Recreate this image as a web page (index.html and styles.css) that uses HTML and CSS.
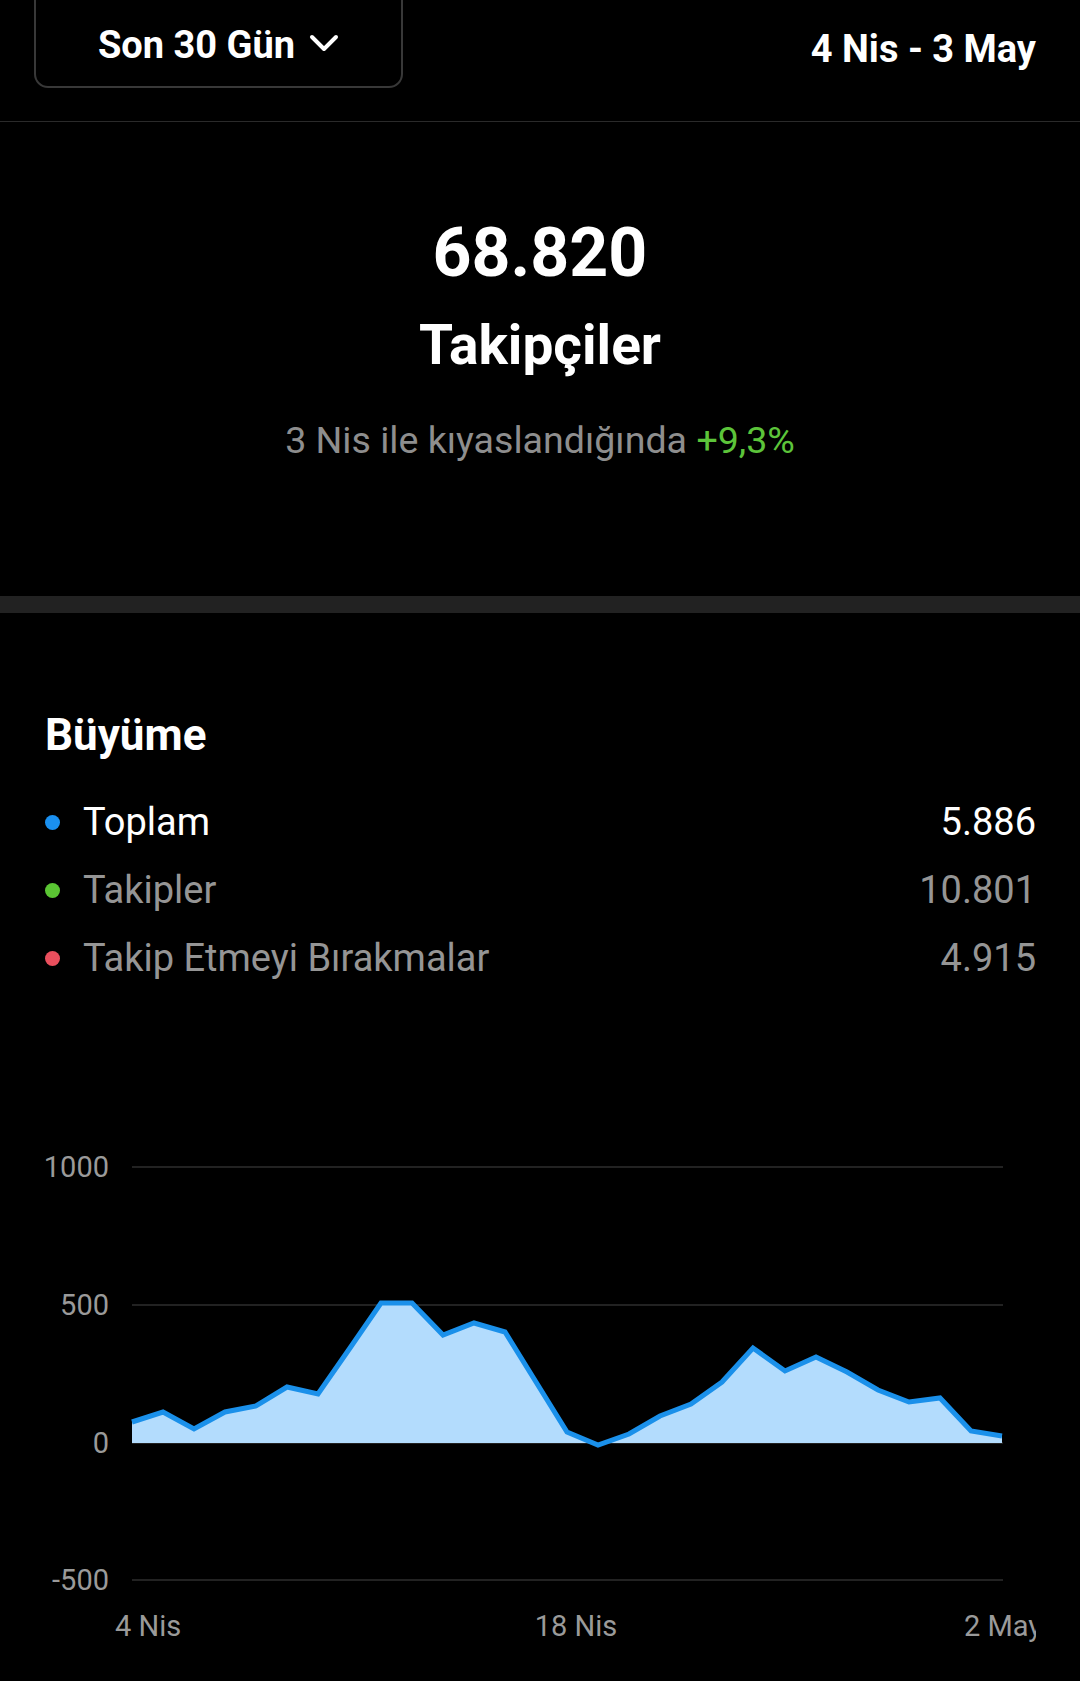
FILE: index.html
```html
<!DOCTYPE html>
<html lang="tr">
<head>
  <meta charset="UTF-8" />
  <meta name="viewport" content="width=device-width, initial-scale=1.0" />
  <title>Takipçiler</title>
  <link rel="stylesheet" href="styles.css">
</head>
<body>
  <header class="topbar">
    <button class="range">
      <span class="range-inner">
        Son 30 Gün
        <svg class="chevron" width="30" height="18" viewBox="0 0 30 18">
          <path d="M3 3 L15 15 L27 3" fill="none" stroke="#fff" stroke-width="4" stroke-linecap="round" stroke-linejoin="round" />
        </svg>
      </span>
    </button>
    <div class="dates">4 Nis - 3 May</div>
  </header>

  <section class="summary">
    <div class="total">68.820</div>
    <div class="total-label">Takipçiler</div>
    <div class="compare">3 Nis ile kıyaslandığında <span class="up">+9,3%</span></div>
  </section>

  <div class="band"></div>

  <section class="growth">
    <h2>Büyüme</h2>
    <ul class="legend">
      <li class="legend-row active">
        <span class="dot blue"></span>
        <span class="legend-name">Toplam</span>
        <span class="legend-value">5.886</span>
      </li>
      <li class="legend-row">
        <span class="dot green"></span>
        <span class="legend-name">Takipler</span>
        <span class="legend-value">10.801</span>
      </li>
      <li class="legend-row">
        <span class="dot red"></span>
        <span class="legend-name">Takip Etmeyi Bırakmalar</span>
        <span class="legend-value">4.915</span>
      </li>
    </ul>
  </section>

  <div class="chart">
    <svg width="1036" height="560" viewBox="0 1100 1036 560">
      <!-- grid -->
      <g class="grid">
        <line x1="132" y1="1168" x2="1003" y2="1168" />
        <line x1="132" y1="1306" x2="1003" y2="1306" />
        <line x1="132" y1="1444" x2="1003" y2="1444" />
        <line x1="132" y1="1581" x2="1003" y2="1581" />
      </g>
      <g class="axis-y">
        <text x="109" y="1178">1000</text>
        <text x="109" y="1316">500</text>
        <text x="109" y="1454">0</text>
        <text x="109" y="1591">-500</text>
      </g>

      <polygon class="area" points="132,1444 132,1423 163,1413 194,1430 225,1413 256,1407 287,1388 318,1395 350,1349 381,1304 412,1304 443,1336 474,1324 505,1333 536,1383 567,1433 598,1446 629,1435 660,1417 691,1405 722,1383 753,1349 785,1372 816,1358 847,1373 878,1391 909,1403 940,1399 971,1432 1002,1437 1002,1444" />
      <polyline class="line" points="132,1423 163,1413 194,1430 225,1413 256,1407 287,1388 318,1395 350,1349 381,1304 412,1304 443,1336 474,1324 505,1333 536,1383 567,1433 598,1446 629,1435 660,1417 691,1405 722,1383 753,1349 785,1372 816,1358 847,1373 878,1391 909,1403 940,1399 971,1432 1002,1437" />

      <!-- last label runs past the chart edge, as in the app -->
      <g class="axis-x">
        <text x="115" y="1637">4 Nis</text>
        <text x="576" y="1637" text-anchor="middle">18 Nis</text>
        <text x="964" y="1637">2 May</text>
      </g>
    </svg>
  </div>
</body>
</html>
```

FILE: styles.css
```css
body {
  margin: 0;
  background: #000;
  color: #fff;
  font-family: Roboto, "Noto Sans", "Liberation Sans", sans-serif;
  overflow: hidden;
}
.topbar {
  display: flex;
  justify-content: space-between;
  align-items: flex-start;
  height: 121px;
  padding: 0 44px 0 34px;
  border-bottom: 1px solid #2a2a2a;
}
.range {
  margin-top: -24px;
  width: 369px;
  height: 112px;
  box-sizing: border-box;
  background: #000;
  border: 2px solid #383838;
  border-radius: 14px;
  display: flex;
  align-items: flex-end;
  justify-content: center;
  padding: 0 0 18px;
  color: #fff;
  font-family: inherit;
  font-size: 38px;
  font-weight: 700;
  line-height: 46px;
  cursor: pointer;
}
.range-inner {
  display: flex;
  align-items: center;
  gap: 14px;
}
.chevron {
  margin-top: -4px;
}
.dates {
  margin-top: 26px;
  font-size: 38px;
  font-weight: 700;
  line-height: 46px;
}
.summary {
  text-align: center;
  padding: 91px 0 134px;
}
.total {
  font-size: 68px;
  font-weight: 700;
  line-height: 80px;
}
.total-label {
  margin-top: 20px;
  font-size: 55px;
  font-weight: 700;
  line-height: 64px;
}
.compare {
  margin-top: 41px;
  font-size: 37.6px;
  line-height: 44px;
  color: #8e8e8e;
}
.up {
  color: #5cc43a;
}
.band {
  height: 17px;
  background: #222;
}
.growth {
  padding: 96px 44px 0 45px;
}
.growth h2 {
  margin: 0;
  font-size: 44px;
  font-weight: 700;
  line-height: 52px;
}
.legend {
  list-style: none;
  margin: 27px 0 0;
  padding: 0;
}
.legend-row {
  display: flex;
  align-items: center;
  height: 68px;
  font-size: 38px;
  color: #959595;
}
.legend-row.active {
  color: #fff;
}
.dot {
  width: 15px;
  height: 15px;
  border-radius: 50%;
  margin-right: 23px;
}
.dot.blue { background: #1a90f0; }
.dot.green { background: #5ac533; }
.dot.red { background: #ea4f5d; }
.legend-value {
  margin-left: auto;
}
.chart {
  margin-top: 107px;
}
.chart svg {
  display: block;
}
.grid line {
  stroke: #2e2e2e;
  stroke-width: 1.5;
}
.axis-y text,
.axis-x text {
  font-family: Roboto, "Noto Sans", sans-serif;
  font-size: 29px;
  fill: #9a9a9a;
}
.axis-y text {
  text-anchor: end;
}
.area {
  fill: #b3dcfd;
}
.line {
  fill: none;
  stroke: #1a90ea;
  stroke-width: 5;
  stroke-linejoin: miter;
}
```
